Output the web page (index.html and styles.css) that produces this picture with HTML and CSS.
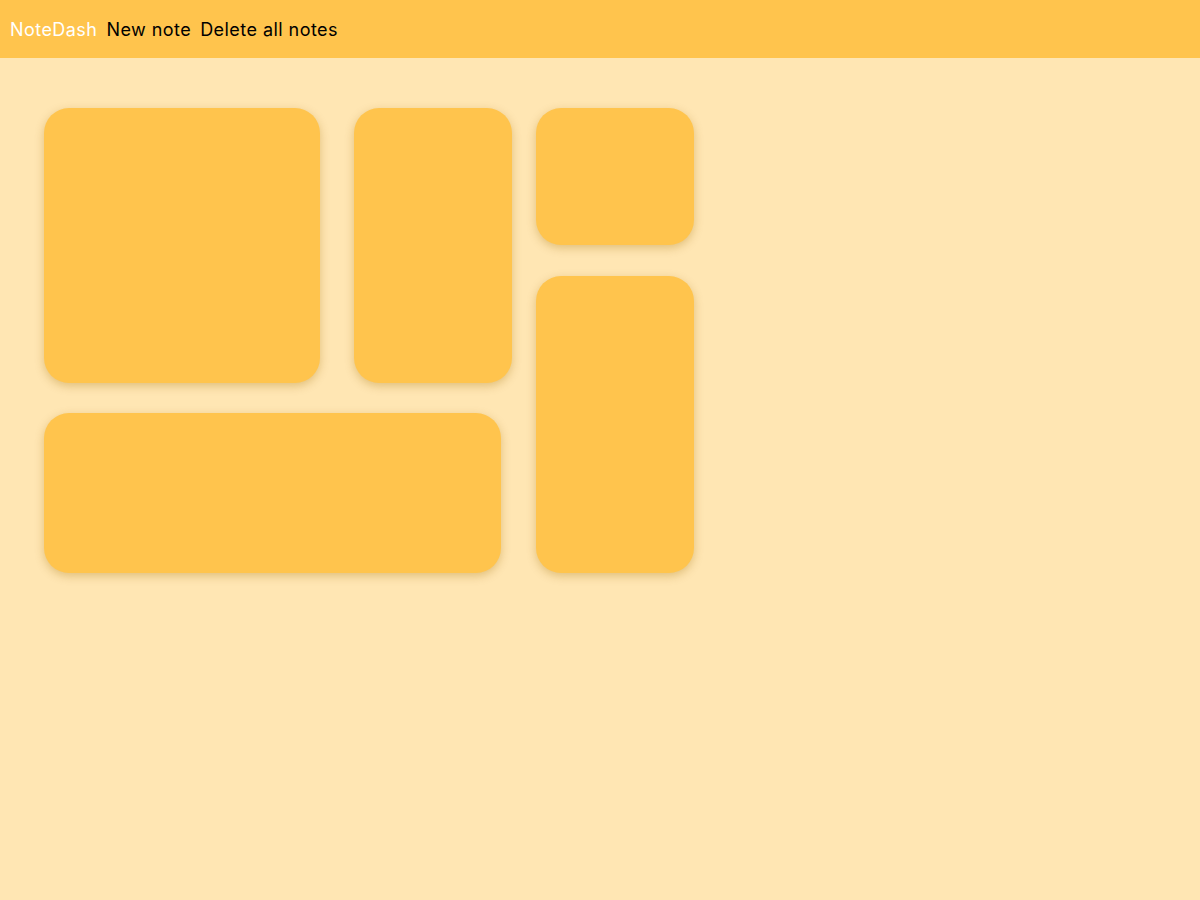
FILE: index.html
```html
<!DOCTYPE html>
<html>
<head>
<meta charset="utf-8">
<link rel="stylesheet" href="styles.css">
</head>
<body>
<header class="topbar">
  <span class="brand">NoteDash</span>
  <span class="nav-item">New note</span>
  <span class="nav-item">Delete all notes</span>
</header>
<main class="board">
  <div class="col-left">
    <div class="row-top">
      <div class="note note-1"></div>
      <div class="note note-2"></div>
    </div>
    <div class="note note-5"></div>
  </div>
  <div class="col-right">
    <div class="note note-3"></div>
    <div class="note note-4"></div>
  </div>
</main>
</body>
</html>
```
FILE: styles.css
```css
html, body {
  margin: 0;
  padding: 0;
}
body {
  background: #ffe6b3;
  font-family: "Inter", "Noto Sans", sans-serif;
  min-height: 900px;
}
.topbar {
  height: 58px;
  background: #ffc44d;
  display: flex;
  align-items: center;
  padding: 0 10px;
  gap: 9px;
  font-size: 18px;
  letter-spacing: 0.45px;
  color: #000;
}
.brand {
  color: #ffffff;
}
.board {
  display: flex;
  gap: 24px;
  padding: 50px 0 0 44px;
  align-items: flex-start;
}
.col-left {
  display: flex;
  flex-direction: column;
  gap: 30px;
}
.row-top {
  display: flex;
  gap: 34px;
}
.col-right {
  display: flex;
  flex-direction: column;
  gap: 31px;
}
.note {
  background: #ffc44d;
  border-radius: 25px;
  box-shadow: 0 3px 10px rgba(160, 110, 0, 0.32);
}
.note-1 { width: 276px; height: 275px; }
.note-2 { width: 158px; height: 275px; }
.note-3 { width: 158px; height: 137px; }
.note-4 { width: 158px; height: 297px; }
.note-5 { width: 457px; height: 160px; }
```
